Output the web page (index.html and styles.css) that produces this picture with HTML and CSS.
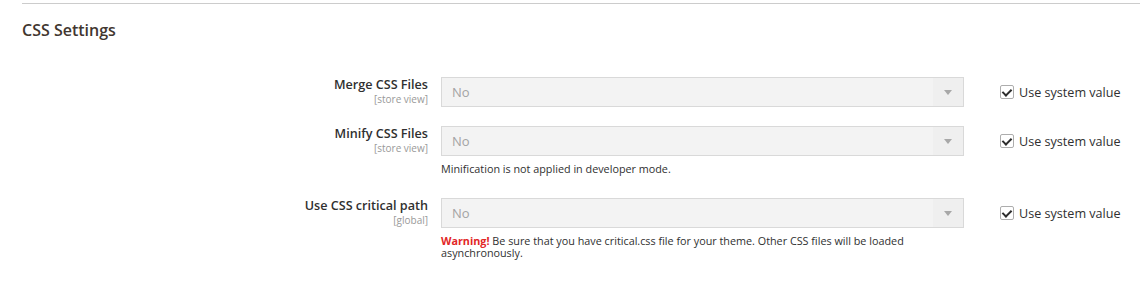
FILE: index.html
```html
<!DOCTYPE html>
<html lang="en">
<head>
  <meta charset="UTF-8">
  <title>CSS Settings</title>
  <link rel="stylesheet" href="styles.css">
</head>
<body>
  <div class="section">
    <div class="section-title">CSS Settings</div>

    <div class="fieldset">
      <div class="field">
        <div class="field-label">
          <span class="label-text">Merge CSS Files</span>
          <span class="scope">[store view]</span>
        </div>
        <div class="field-control">
          <div class="select">No</div>
        </div>
        <label class="use-default">
          <span class="checkbox"></span>
          Use system value
        </label>
      </div>

      <div class="field">
        <div class="field-label">
          <span class="label-text">Minify CSS Files</span>
          <span class="scope">[store view]</span>
        </div>
        <div class="field-control">
          <div class="select">No</div>
          <p class="note">Minification is not applied in developer mode.</p>
        </div>
        <label class="use-default">
          <span class="checkbox"></span>
          Use system value
        </label>
      </div>

      <div class="field">
        <div class="field-label">
          <span class="label-text">Use CSS critical path</span>
          <span class="scope">[global]</span>
        </div>
        <div class="field-control">
          <div class="select">No</div>
          <p class="note"><strong class="warning">Warning!</strong> Be sure that you have critical.css file for your theme. Other CSS files will be loaded asynchronously.</p>
        </div>
        <label class="use-default">
          <span class="checkbox"></span>
          Use system value
        </label>
      </div>
    </div>
  </div>
</body>
</html>
```

FILE: styles.css
```css
body {
  margin: 0;
  padding: 0;
  font-family: 'Open Sans', 'Noto Sans', sans-serif;
  color: #303030;
  background: #fff;
}

.section {
  margin-top: 3px;
  margin-left: 22px;
  border-top: 1px solid #cccccc;
}

.section-title {
  font-size: 16px;
  font-weight: 600;
  color: #41362f;
  line-height: 24px;
  padding-top: 14px;
  margin-bottom: 35px;
}

.field {
  display: grid;
  grid-template-columns: 406px 523px 1fr;
  column-gap: 13px;
  margin-bottom: 19px;
}

.field-label {
  display: flex;
  flex-direction: column;
  align-items: flex-end;
}

.label-text {
  font-size: 12.6px;
  font-weight: 600;
  line-height: 16px;
}

.scope {
  font-size: 10px;
  color: #999;
  line-height: 12px;
}

.select {
  height: 28px;
  border: 1px solid #d9d9d9;
  background: #f3f3f3 linear-gradient(to left, #efefef 30px, transparent 30px);
  color: #a3a3a3;
  font-size: 13px;
  line-height: 28px;
  padding-left: 10px;
  position: relative;
}

.select::after {
  content: '';
  position: absolute;
  right: 11px;
  top: 12px;
  border-left: 4px solid transparent;
  border-right: 4px solid transparent;
  border-top: 5px solid #a8a8a8;
}

.note {
  margin: 7px 0 0;
  padding: 0 40px 4px 0;
  font-size: 10.8px;
  line-height: 12px;
}

.warning {
  color: #e22626;
  font-weight: 700;
}

.use-default {
  display: flex;
  align-items: center;
  gap: 5px;
  padding-left: 23px;
  height: 30px;
  font-size: 12.6px;
  color: #303030;
}

.checkbox {
  width: 12px;
  height: 12px;
  border: 1px solid #adadad;
  border-radius: 2px;
  position: relative;
}

.checkbox::after {
  content: '';
  position: absolute;
  left: 3px;
  top: 1px;
  width: 4px;
  height: 7px;
  border-right: 2px solid #2c2c2c;
  border-bottom: 2px solid #2c2c2c;
  transform: rotate(45deg);
}
```
